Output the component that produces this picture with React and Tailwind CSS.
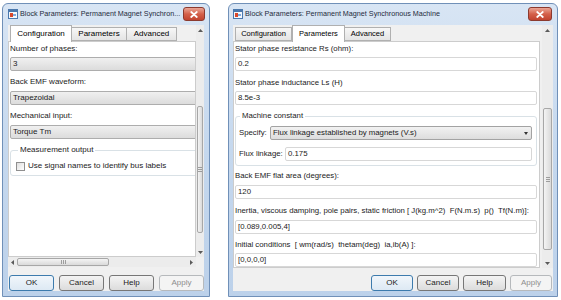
import React from "react";

// --- small window chrome pieces ---
function AppIcon() {
  return (
    <svg width="10" height="10" viewBox="0 0 10 10">
      <rect x="0.5" y="0.5" width="9" height="9" fill="#f4f7fb" stroke="#4a78ad" />
      <rect x="1" y="1" width="8" height="2" fill="#4a78ad" />
      <rect x="2" y="4" width="3" height="4" fill="#d7472c" />
      <path d="M5 6h3" stroke="#2e7ad1" strokeWidth="1.2" />
    </svg>
  );
}

function CloseBtn({ w }) {
  return (
    <div className={`${w} h-[14px] rounded-[3px] border border-[#8b3a2f] bg-gradient-to-b from-[#eaa595] via-[#d4604a] to-[#c1432f] flex items-center justify-center`}>
      <svg width="8" height="7" viewBox="0 0 8 7">
        <path d="M1.2 1l5.6 5M6.8 1L1.2 6" stroke="#fff" strokeWidth="1.7" strokeLinecap="round" />
      </svg>
    </div>
  );
}

function TitleBar({ title, closeW, pad }) {
  return (
    <div className={`h-[21px] flex items-start pt-[3px] ${pad}`}>
      <div className="mt-[2px]"><AppIcon /></div>
      <span className="ml-[2px] mt-[2px] flex-1 min-w-0 whitespace-nowrap overflow-hidden text-[7.2px] leading-[10px] text-[#1e2b3c]">{title}</span>
      <CloseBtn w={closeW} />
    </div>
  );
}

function Tabs({ tabs, active, size }) {
  return (
    <div className="h-[16px] flex items-end pl-[2px] relative z-10">
      {tabs.map(([label, w]) => (
        <div
          key={label}
          className={`${w} ${size} flex items-center justify-center border border-[#b0b0b0] ${
            label === active
              ? "h-[17px] -mb-px border-b-0 bg-white"
              : "h-[14px] bg-gradient-to-b from-[#f7f7f7] to-[#e4e4e4] -ml-px first:ml-0"
          }`}
        >
          {label}
        </div>
      ))}
    </div>
  );
}

function UpDown({ dir }) {
  return (
    <div className="h-[10px] w-full flex items-center justify-center">
      <svg width="5" height="3" viewBox="0 0 5 3">
        {dir === "up" ? <path d="M0 3L2.5 0L5 3z" fill="#5a5a5a" /> : <path d="M0 0L2.5 3L5 0z" fill="#5a5a5a" />}
      </svg>
    </div>
  );
}

function Grip({ vertical }) {
  return vertical ? (
    <svg width="4" height="5" viewBox="0 0 4 5"><path d="M0 .5h4M0 2.5h4M0 4.5h4" stroke="#8a8a8a" strokeWidth="0.8" /></svg>
  ) : (
    <svg width="5" height="4" viewBox="0 0 5 4"><path d="M.5 0v4M2.5 0v4M4.5 0v4" stroke="#8a8a8a" strokeWidth="0.8" /></svg>
  );
}

function VScroll({ w, thumb }) {
  return (
    <div className={`${w} bg-[#ececec] flex flex-col`}>
      <UpDown dir="up" />
      <div className="flex-1 px-[1px]">
        <div className={`${thumb} rounded-[2px] border border-[#a7a7a7] bg-gradient-to-r from-[#f4f4f4] to-[#dadada] flex items-center justify-center`}>
          <Grip vertical />
        </div>
      </div>
      <UpDown dir="down" />
    </div>
  );
}

function Btn({ label, w, kind }) {
  const look =
    kind === "focus"
      ? "border-[#3d7bad] bg-gradient-to-b from-[#f1f6fb] to-[#dde9f4] text-[#1b1b1b]"
      : kind === "off"
      ? "border-[#b6b9bc] bg-[#f4f4f4] text-[#8d8d8d]"
      : "border-[#777777] bg-gradient-to-b from-[#f4f4f4] to-[#dcdcdc] text-[#1b1b1b]";
  return (
    <div className={`${w} h-[16px] rounded-[3px] border ${look} flex items-center justify-center text-[8px]`}>
      {label}
    </div>
  );
}

// --- field helpers ---
function GrayBox({ value }) {
  return (
    <div className="w-[200px] h-[14px] border border-[#adadad] rounded-[2px] bg-gradient-to-b from-[#f0f0f0] to-[#dcdcdc] flex items-center pl-[2px]">
      {value}
    </div>
  );
}

function WhiteBox({ value, w = "w-full" }) {
  return (
    <div className={`${w} h-[14px] border border-[#d7d7d7] rounded-[2px] bg-white flex items-center pl-[2px]`}>
      {value}
    </div>
  );
}

function LeftDialog() {
  return (
    <div className="w-[208px] h-[294px] mt-[3px] ml-[2px] shrink-0 border border-[#7090b8] rounded-t-[6px] bg-gradient-to-b from-[#d8e5f4] via-[#c5d8ee] to-[#bcd1ea] flex flex-col">
      <TitleBar title="Block Parameters: Permanent Magnet Synchron..." closeW="w-[22px]" pad="pl-[5px] pr-[4px]" />
      <div className="flex-1 mx-[5px] mb-[5px] bg-[#f0f0f0] flex flex-col">
        <div className="h-[232px] flex">
          <div className="flex-1 min-w-0 flex flex-col">
            <Tabs
              size="text-[8px]"
              active="Configuration"
              tabs={[["Configuration", "w-[62px]"], ["Parameters", "w-[56px]"], ["Advanced", "w-[51px]"]]}
            />
            <div className="flex-1 bg-white border border-[#cccccc] overflow-hidden pl-[1px] text-[8px] leading-[12px] text-[#1b1b1b]">
              <div className="h-[15px] pt-[1px]">Number of phases:</div>
              <GrayBox value="3" />
              <div className="h-[20px] pt-[5px]">Back EMF waveform:</div>
              <GrayBox value="Trapezoidal" />
              <div className="h-[20px] pt-[5px]">Mechanical input:</div>
              <GrayBox value="Torque Tm" />
              <fieldset className="w-[200px] mt-[5px] border border-[#d9e1e6] rounded-[3px] pl-[5px] pb-[3px]">
                <legend className="ml-[2px] px-[2px] leading-[12px]">Measurement output</legend>
                <label className="mt-[4px] flex items-center gap-[3px] h-[12px]">
                  <span className="w-[9px] h-[9px] border border-[#8f8f8f] bg-gradient-to-br from-[#dedede] to-[#ffffff]" />
                  Use signal names to identify bus labels
                </label>
              </fieldset>
            </div>
          </div>
          <VScroll w="w-[8px]" thumb="mt-[71px] h-[127px]" />
        </div>
        <div className="h-[10px] flex bg-[#ececec]">
          <div className="w-[188px] flex items-center">
            <div className="w-[9px] flex justify-center">
              <svg width="3" height="5" viewBox="0 0 3 5"><path d="M3 0L0 2.5L3 5z" fill="#5a5a5a" /></svg>
            </div>
            <div className="w-[92px] h-[8px] rounded-[2px] border border-[#a7a7a7] bg-gradient-to-b from-[#f4f4f4] to-[#dadada] flex items-center justify-center">
              <Grip />
            </div>
            <div className="flex-1" />
            <div className="w-[9px] flex justify-center">
              <svg width="3" height="5" viewBox="0 0 3 5"><path d="M0 0L3 2.5L0 5z" fill="#5a5a5a" /></svg>
            </div>
          </div>
          <div className="flex-1 bg-[#f0f0f0]" />
        </div>
        <div className="mt-[8px] flex justify-end gap-[5px]">
          <Btn label="OK" w="w-[45px]" kind="focus" />
          <Btn label="Cancel" w="w-[45px]" />
          <Btn label="Help" w="w-[45px]" />
          <Btn label="Apply" w="w-[45px]" kind="off" />
        </div>
      </div>
    </div>
  );
}

function RightDialog() {
  return (
    <div className="w-[330px] h-[294px] mt-[3px] ml-[18px] shrink-0 border border-[#7090b8] rounded-t-[6px] bg-gradient-to-b from-[#d8e5f4] via-[#c5d8ee] to-[#bcd1ea] flex flex-col">
      <TitleBar title="Block Parameters: Permanent Magnet Synchronous Machine" closeW="w-[24px]" pad="pl-[4px] pr-[5px]" />
      <div className="flex-1 mx-[4px] mb-[5px] bg-[#f0f0f0] flex flex-col">
        <div className="h-[243px] flex">
          <div className="flex-1 min-w-0 flex flex-col">
            <Tabs
              size="text-[7.5px]"
              active="Parameters"
              tabs={[["Configuration", "w-[57px]"], ["Parameters", "w-[53px]"], ["Advanced", "w-[47px]"]]}
            />
            <div className="flex-1 bg-white border border-[#cccccc] overflow-hidden pl-[1px] pr-[2px] text-[7.8px] leading-[12px] text-[#1b1b1b]">
              <div className="h-[15px] pt-[1px]">Stator phase resistance Rs (ohm):</div>
              <WhiteBox value="0.2" />
              <div className="h-[20px] pt-[6px]">Stator phase inductance Ls (H)</div>
              <WhiteBox value="8.5e-3" />
              <fieldset className="mt-[5px] border border-[#d9e1e6] rounded-[3px] px-[3px] pr-[4px] pb-[4px]">
                <legend className="ml-[1px] px-[2px] leading-[12px]">Machine constant</legend>
                <div className="mt-[4px] flex items-center">
                  <span className="w-[31px] shrink-0">Specify:</span>
                  <div className="flex-1 h-[14px] border border-[#a3a3a3] rounded-[2px] bg-gradient-to-b from-[#f2f2f2] to-[#dddddd] flex items-center pl-[2px] pr-[3px]">
                    <span className="flex-1">Flux linkage established by magnets (V.s)</span>
                    <svg width="4" height="3" viewBox="0 0 4 3"><path d="M0 0L2 3L4 0z" fill="#333" /></svg>
                  </div>
                </div>
                <div className="mt-[7px] flex items-center">
                  <span className="w-[46px] shrink-0">Flux linkage:</span>
                  <WhiteBox value="0.175" />
                </div>
              </fieldset>
              <div className="h-[19px] pt-[4px]">Back EMF flat area (degrees):</div>
              <WhiteBox value="120" />
              <div className="h-[21px] pt-[6px] whitespace-nowrap">
                Inertia, viscous damping, pole pairs, static friction [ J(kg.m^2)&nbsp; F(N.m.s)&nbsp; p()&nbsp; Tf(N.m)]:
              </div>
              <WhiteBox value="[0.089,0.005,4]" />
              <div className="h-[19px] pt-[5px] whitespace-pre">Initial conditions  [ wm(rad/s)  thetam(deg)  ia,ib(A) ]:</div>
              <WhiteBox value="[0,0,0,0]" />
            </div>
          </div>
          <div className="w-[2px]" />
          <VScroll w="w-[11px]" thumb="mt-[73px] h-[142px]" />
        </div>
        <div className="mt-[7px] flex justify-end gap-[4px] pr-[1px]">
          <Btn label="OK" w="w-[42px]" kind="focus" />
          <Btn label="Cancel" w="w-[42px]" />
          <Btn label="Help" w="w-[43px]" />
          <Btn label="Apply" w="w-[42px]" kind="off" />
        </div>
      </div>
    </div>
  );
}

export default function App() {
  return (
    <div className="w-[561px] h-[300px] bg-white flex items-start overflow-hidden font-['Liberation_Sans',Arial,sans-serif]">
      <LeftDialog />
      <RightDialog />
    </div>
  );
}
